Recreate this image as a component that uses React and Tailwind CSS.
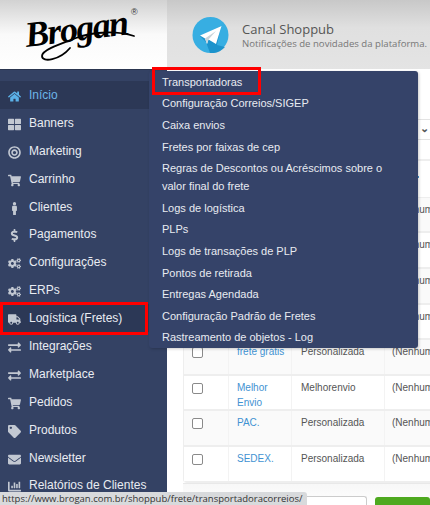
import React from "react";
import {
  FaHome, FaThLarge, FaBullseye, FaShoppingCart, FaMale, FaDollarSign, FaCogs, FaTruck,
  FaExchangeAlt, FaTag, FaEnvelope, FaChartBar,
} from "react-icons/fa";

const nav = [
  ["Início", FaHome, "active"],
  ["Banners", FaThLarge],
  ["Marketing", FaBullseye],
  ["Carrinho", FaShoppingCart],
  ["Clientes", FaMale],
  ["Pagamentos", FaDollarSign],
  ["Configurações", FaCogs],
  ["ERPs", FaCogs],
  ["Logística (Fretes)", FaTruck, "open"],
  ["Integrações", FaExchangeAlt],
  ["Marketplace", FaExchangeAlt],
  ["Pedidos", FaShoppingCart],
  ["Produtos", FaTag],
  ["Newsletter", FaEnvelope],
  ["Relatórios de Clientes", FaChartBar],
];

const menu = [
  "Transportadoras",
  "Configuração Correios/SIGEP",
  "Caixa envios",
  "Fretes por faixas de cep",
  "Regras de Descontos ou Acréscimos sobre o valor final do frete",
  "Logs de logística",
  "PLPs",
  "Logs de transações de PLP",
  "Pontos de retirada",
  "Entregas Agendada",
  "Configuração Padrão de Fretes",
  "Rastreamento de objetos - Log",
];

function Row({ h, name, type, extra, shaded }) {
  return (
    <div className={`flex border-b-2 border-[#eeeeee] ${h} ${shaded ? "bg-[#fafafa]" : "bg-white"}`}>
      <div className="w-[45px] shrink-0 border-r border-[#f3f3f3] pl-[8px] pt-[7px]">
        <div className="h-[11px] w-[11px] rounded-[2px] border border-[#8a8a8a] bg-white" />
      </div>
      <div className="w-[63px] shrink-0 border-r border-[#f3f3f3] pl-[8px] pt-[5px] leading-[14.5px] text-[#3f92d2]">{name}</div>
      <div className="w-[93px] shrink-0 border-r border-[#f3f3f3] pl-[9px] pt-[5px] leading-[14.5px] text-[#555555]">{type}</div>
      <div className="pl-[7px] pt-[5px] leading-[14.5px] whitespace-nowrap text-[#555555]">{extra}</div>
    </div>
  );
}

export default function App() {
  return (
    <div className="relative h-[505px] w-[430px] overflow-hidden bg-white font-['Liberation_Sans',Arial,sans-serif]">
      <header className="flex h-[69px]">
        <div className="relative w-[167px] shrink-0 overflow-hidden bg-gradient-to-b from-[#d2d2d2] via-[#fafafa] via-50% to-white">
          <div className="absolute left-[25px] top-[13px] origin-left -rotate-[7deg] font-['Liberation_Serif',serif] text-[36px] font-bold italic leading-[44px] tracking-[-1.5px] text-black">
            Brogan
          </div>
          <div className="absolute left-[131px] top-[7px] text-[9px] leading-[10px] text-[#333333]">®</div>
          <svg className="absolute left-0 top-0" width="167" height="69" viewBox="0 0 167 69" fill="none">
            <path d="M134 36 C118 31 95 31 76 38 C60 44 42 50 42 56 C42 63 60 60 70 48" stroke="#000" strokeWidth="1.8" strokeLinecap="round" />
          </svg>
        </div>
        <div className="flex min-w-0 flex-1 items-start bg-gradient-to-b from-[#c8c8c8] via-[#e0e0e0] via-40% to-[#e4e4e4] pl-[25px] pt-[17px]">
          <svg className="shrink-0" width="37" height="36" viewBox="0 0 37 36">
            <circle cx="18.5" cy="18" r="18" fill="#37aee2" />
            <path d="M8 19 L29 9 L25 28 L33 30 A18 18 0 0 1 18 36 L14 25 Z" fill="#1c93cc" />
            <path d="M8 18.5 L29.5 9 L24 27 L16.5 22.5 L15 27 L13 21.5 Z" fill="#ffffff" />
            <path d="M13 21.5 L15 27 L16.5 22.5 L24 14 Z" fill="#c8d4da" />
          </svg>
          <div className="ml-[13px] min-w-0 font-['Open_Sans',sans-serif]">
            <div className="pt-[4px] text-[13px] leading-[16px] text-[#555555]">Canal Shoppub</div>
            <div className="w-[188px] overflow-hidden text-[9.6px] leading-[14px] whitespace-nowrap text-[#777777]">Notificações de novidades da plataforma.</div>
          </div>
        </div>
      </header>

      <div className="flex h-[436px]">
        <aside className="w-[167px] shrink-0 overflow-hidden border-t border-[#2b3650] bg-[#344264] pt-[11px]">
          {nav.map(([label, Icon, state]) => (
            <div
              key={label}
              className={`flex h-[27.9px] items-center text-[12px] whitespace-nowrap ${
                state ? "bg-[#2c3856]" : ""
              } ${state === "active" ? "text-[#6db5e8]" : "text-[#e9ecf2]"}`}
            >
              <span className="flex w-[29px] shrink-0 justify-center pt-[3px]">
                <Icon className={`h-[13px] w-[13px] ${state === "active" ? "text-[#5bb1e8]" : "text-[#c2c8d2]"}`} />
              </span>
              {label}
            </div>
          ))}
        </aside>

        <main className="min-w-0 flex-1 bg-white pl-[16px] pt-[50px] text-[10px]">
          <div className="h-[21px] border-y border-[#e3e3e3] pr-[1px] text-right text-[11px] font-bold leading-[16px] text-[#555555]">⌄</div>
          <div className="h-[21px] border-b-2 border-[#eeeeee]" />
          <div className="flex h-[37px] justify-end border-b border-[#eeeeee] pr-[11px] pt-[15px]">
            <div className="h-[2px] w-[2px] bg-[#3f92d2]" />
          </div>
          <div className="w-[247px] overflow-hidden rounded-bl-[4px] border-l border-[#eeeeee]">
            <Row h="h-[35px]" extra="(Nenhum)" shaded />
            <Row h="h-[36px]" extra="(Nenhum)" />
            <Row h="h-[36px]" extra="(Nenhum)" shaded />
            <Row h="h-[35px]" extra="(Nenhum)" />
            <Row h="h-[36px]" name="frete grátis" type="Personalizada" extra="(Nenhum)" shaded />
            <Row h="h-[35px]" name="Melhor Envio" type="Melhorenvio" extra="(Nenhum)" />
            <Row h="h-[36px]" name="PAC." type="Personalizada" extra="(Nenhum)" shaded />
            <Row h="h-[36px]" name="SEDEX." type="Personalizada" extra="(Nenhum)" />
          </div>
          <div className="flex h-[22px] items-end justify-end gap-[8px] border-t border-[#e8e8e8] bg-gradient-to-b from-[#f7f7f7] to-white">
            <div className="h-[9px] w-[78px] rounded-t-[3px] border border-b-0 border-[#cccccc] bg-white" />
            <div className="h-[8px] w-[55px] rounded-t-[3px] bg-[#4ea91f]" />
          </div>
        </main>
      </div>

      <div className="absolute left-[149px] top-[71px] w-[269px] rounded-[3px] bg-[#354369] pl-[13px] pr-[30px] text-[11px] leading-[18px] text-[#e8ebf1] shadow-[1px_1px_3px_rgba(0,0,0,0.2)]">
        {menu.map((m) => (
          <div key={m} className="py-[1.8px]">{m}</div>
        ))}
      </div>

      <div className="absolute left-[152px] top-[67px] h-[28px] w-[109px] border-[3px] border-[#ff0000]" />
      <div className="absolute left-0 top-[302px] h-[33px] w-[148px] border-[3px] border-[#ff0000]" />

      <div className="absolute bottom-0 left-0 h-[13px] w-[307px] rounded-tr-[3px] bg-[#d8dadc] pl-[2px] font-['Open_Sans',sans-serif] text-[9.5px] leading-[13px] whitespace-nowrap text-[#333333]">
        https://www.brogan.com.br/shoppub/frete/transportadoracorreios/
      </div>
    </div>
  );
}
